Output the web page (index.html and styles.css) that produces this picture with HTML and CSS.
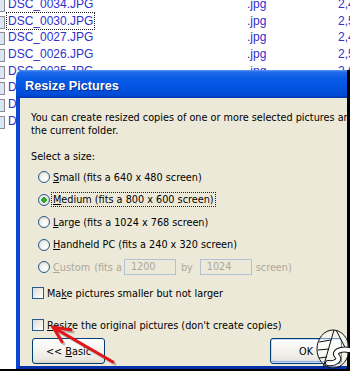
FILE: index.html
```html
<!DOCTYPE html>
<html>
<head>
  <title>Resize Pictures</title>
  <meta charset="UTF-8"/>
  <link rel="stylesheet" href="styles.css">
</head>
<body>

  <div class="screen">
    <div class="file-list">
      <div class="file-row"><span class="file-icon"></span><span class="file-name">DSC_0034.JPG</span><span class="file-type">.jpg</span><span class="file-size">2,412 KB</span></div>
      <div class="file-row"><span class="file-icon"></span><span class="file-name"><span class="focus-box">DSC_0030.JPG</span></span><span class="file-type">.jpg</span><span class="file-size">2,587 KB</span></div>
      <div class="file-row"><span class="file-icon"></span><span class="file-name">DSC_0027.JPG</span><span class="file-type">.jpg</span><span class="file-size">2,455 KB</span></div>
      <div class="file-row"><span class="file-icon"></span><span class="file-name">DSC_0026.JPG</span><span class="file-type">.jpg</span><span class="file-size">2,563 KB</span></div>
      <div class="file-row"><span class="file-icon"></span><span class="file-name">DSC_0025.JPG</span><span class="file-type">.jpg</span><span class="file-size">2,610 KB</span></div>
      <div class="file-row"><span class="file-icon"></span><span class="file-name">DSC_0024.JPG</span><span class="file-type">.jpg</span><span class="file-size">2,498 KB</span></div>
      <div class="file-row"><span class="file-icon"></span><span class="file-name">DSC_0023.JPG</span><span class="file-type">.jpg</span><span class="file-size">2,530 KB</span></div>
      <div class="file-row"><span class="file-icon"></span><span class="file-name">DSC_0022.JPG</span><span class="file-type">.jpg</span><span class="file-size">2,471 KB</span></div>
    </div>

    <div class="dialog">
      <div class="title-bar">Resize Pictures</div>
      <div class="dialog-body">
        <p class="intro">You can create resized copies of one or more selected pictures and in<br>the current folder.</p>
        <div class="label">Select a size:</div>

        <div class="option first"><span class="radio"></span><span><u>S</u>mall (fits a 640 x 480 screen)</span></div>
        <div class="option"><span class="radio checked"></span><span class="focus"><u>M</u>edium (fits a 800 x 600 screen)</span></div>
        <div class="option"><span class="radio"></span><span><u>L</u>arge (fits a 1024 x 768 screen)</span></div>
        <div class="option"><span class="radio"></span><span><u>H</u>andheld PC (fits a 240 x 320 screen)</span></div>
        <div class="option disabled"><span class="radio"></span><span><u>C</u>ustom</span><span class="fits">(fits a</span><span class="box">1200</span><span class="by">by</span><span class="box">1024</span><span class="after">screen)</span></div>

        <div class="check first"><span class="checkbox"></span><span>Ma<u>k</u>e pictures smaller but not larger</span></div>
        <div class="check second"><span class="checkbox"></span><span><u>R</u>esize the original pictures (don't create copies)</span></div>

        <div class="buttons">
          <button class="btn basic">&lt;&lt; <u>B</u>asic</button>
          <button class="btn default">OK</button>
        </div>
      </div>
    </div>

    <!-- red arrow pointing at the checkbox -->
    <svg class="overlay" width="350" height="371" viewBox="0 0 350 371">
      <g stroke="#7a7a7a" stroke-opacity="0.5" stroke-width="3" fill="none" stroke-linecap="round" stroke-linejoin="round" transform="translate(2 2)">
        <path d="M113 362 L56 329"/>
        <path d="M71 330 L53 327 L62 342"/>
      </g>
      <g stroke="#e3151b" stroke-width="3" fill="none" stroke-linecap="round" stroke-linejoin="round">
        <path d="M113 362 L56 329"/>
        <path d="M71 330 L53 327 L62 342"/>
      </g>

      <!-- watermark logo -->
      <g fill="none" stroke="#111" stroke-width="1">
        <ellipse cx="333" cy="349" rx="16" ry="19" fill="#fff" fill-opacity="0.45"/>
        <path d="M334 330 L323 368"/>
        <path d="M336 330 L348 353"/>
        <path d="M319 342 L331 340 M318 350 L329 349 M319 358 L327 357"/>
      </g>
      <path d="M349 350 C341 348 333 352 337 356 C341 360 335 364 328 363" fill="none" stroke="#111" stroke-width="6" stroke-linecap="round"/>
      <path d="M349 350 C341 348 333 352 337 356 C341 360 335 364 328 363" fill="none" stroke="#fff" stroke-width="4" stroke-linecap="round"/>
    </svg>
  </div>

</body>
</html>
```

FILE: styles.css
```css
body {
  margin: 0;
  background-color: #fff;
}

.screen {
  position: relative;
  width: 350px;
  height: 371px;
  box-sizing: border-box;
  border-bottom: 2px solid #000;
  overflow: hidden;
  background-color: #fff;
}

/* file list behind the dialog */
.file-list {
  margin-top: -4px;
  font-family: "Liberation Sans", Arial, sans-serif;
  font-size: 12px;
  color: #3030cc;
}

.file-row {
  display: grid;
  grid-template-columns: 8px 239px 91px auto;
  height: 16.67px;
  line-height: 16.67px;
  white-space: nowrap;
}

.file-icon {
  width: 5px;
  height: 11px;
  margin: 3px 0 0 -2px;
  border: 1px solid #8c8c96;
  background-color: #dbe6f4;
}

.focus-box {
  outline: 1px dotted #222;
  outline-offset: 1px;
}

/* dialog window */
.dialog {
  position: absolute;
  left: 16px;
  top: 70px;
  right: 0;
  bottom: 0;
  display: flex;
  flex-direction: column;
  border-right: 3px solid #000;
  font-family: "DejaVu Sans", Tahoma, sans-serif;
  font-size: 9.7px;
  color: #000;
}

.title-bar {
  height: 28px;
  box-sizing: border-box;
  padding: 3px 0 0 9px;
  display: flex;
  align-items: center;
  border-top-left-radius: 7px;
  background: linear-gradient(#5a98f2 0, #1f6cea 2px, #0a5ce6 8px, #0356e2 55%, #004bd6 90%, #0036b0 100%);
  color: #fff;
  font-family: "Liberation Sans", Arial, sans-serif;
  font-weight: bold;
  font-size: 12.7px;
  text-shadow: 1px 1px #0b2a8c;
}

.dialog-body {
  flex: 1;
  padding: 13px 5px 0 11px;
  border-left: 4px solid #0a45d4;
  border-bottom: 3px solid #0230a8;
  background-color: #ece9d8;
  white-space: nowrap;
  overflow: hidden;
}

.intro {
  margin: 0;
  line-height: 13px;
}

.label {
  margin-top: 13px;
  line-height: 13px;
}

.option {
  display: flex;
  align-items: center;
  height: 22.5px;
  padding-left: 7px;
}

.option.first {
  margin-top: 3px;
}

.radio {
  flex: none;
  width: 10px;
  height: 10px;
  margin-right: 3px;
  border: 1px solid #2a5a8c;
  border-radius: 50%;
  background: radial-gradient(circle at 60% 65%, #fff 0, #f4f3ee 40%, #d5d3c8 100%);
}

.radio.checked {
  background: radial-gradient(circle at 50% 50%, #3fc23f 0, #1c9a1c 2.5px, #f4f3ee 3px, #f4f3ee 40%, #d5d3c8 100%);
}

.focus {
  outline: 1px dotted #222;
  outline-offset: 1px;
}

.option.disabled {
  color: #aca899;
}

.fits {
  margin: 0 2px 0 4px;
}

.box {
  width: 52px;
  height: 16px;
  box-sizing: border-box;
  padding-left: 6px;
  line-height: 14px;
  border: 1px solid #b2c2d6;
}

.by {
  margin: 0 7px 0 5px;
}

.after {
  margin-left: 4px;
}

.check {
  display: flex;
  align-items: center;
  height: 20px;
  padding-left: 1px;
}

.check.first {
  margin-top: 4.5px;
}

.check.second {
  margin-top: 12px;
}

.checkbox {
  flex: none;
  width: 10px;
  height: 10px;
  margin-right: 3px;
  border: 1px solid #2a5a8c;
  background: linear-gradient(135deg, #dcdad0, #fff);
}

.buttons {
  display: flex;
  justify-content: space-between;
  margin-top: 3px;
  padding-left: 1px;
}

.btn {
  height: 26px;
  padding: 0;
  border: 1px solid #003c74;
  border-radius: 3px;
  background: linear-gradient(#fff, #f5f4f0 45%, #eae8df 85%, #d8d2c6);
  font-family: inherit;
  font-size: inherit;
  color: #000;
}

.btn.basic {
  width: 73px;
}

.btn.default {
  width: 72px;
  box-shadow: inset 0 0 0 1px #c5dafa, inset 0 -1px 0 1px #8eabec;
}

.overlay {
  position: absolute;
  left: 0;
  top: 0;
  pointer-events: none;
}
```
